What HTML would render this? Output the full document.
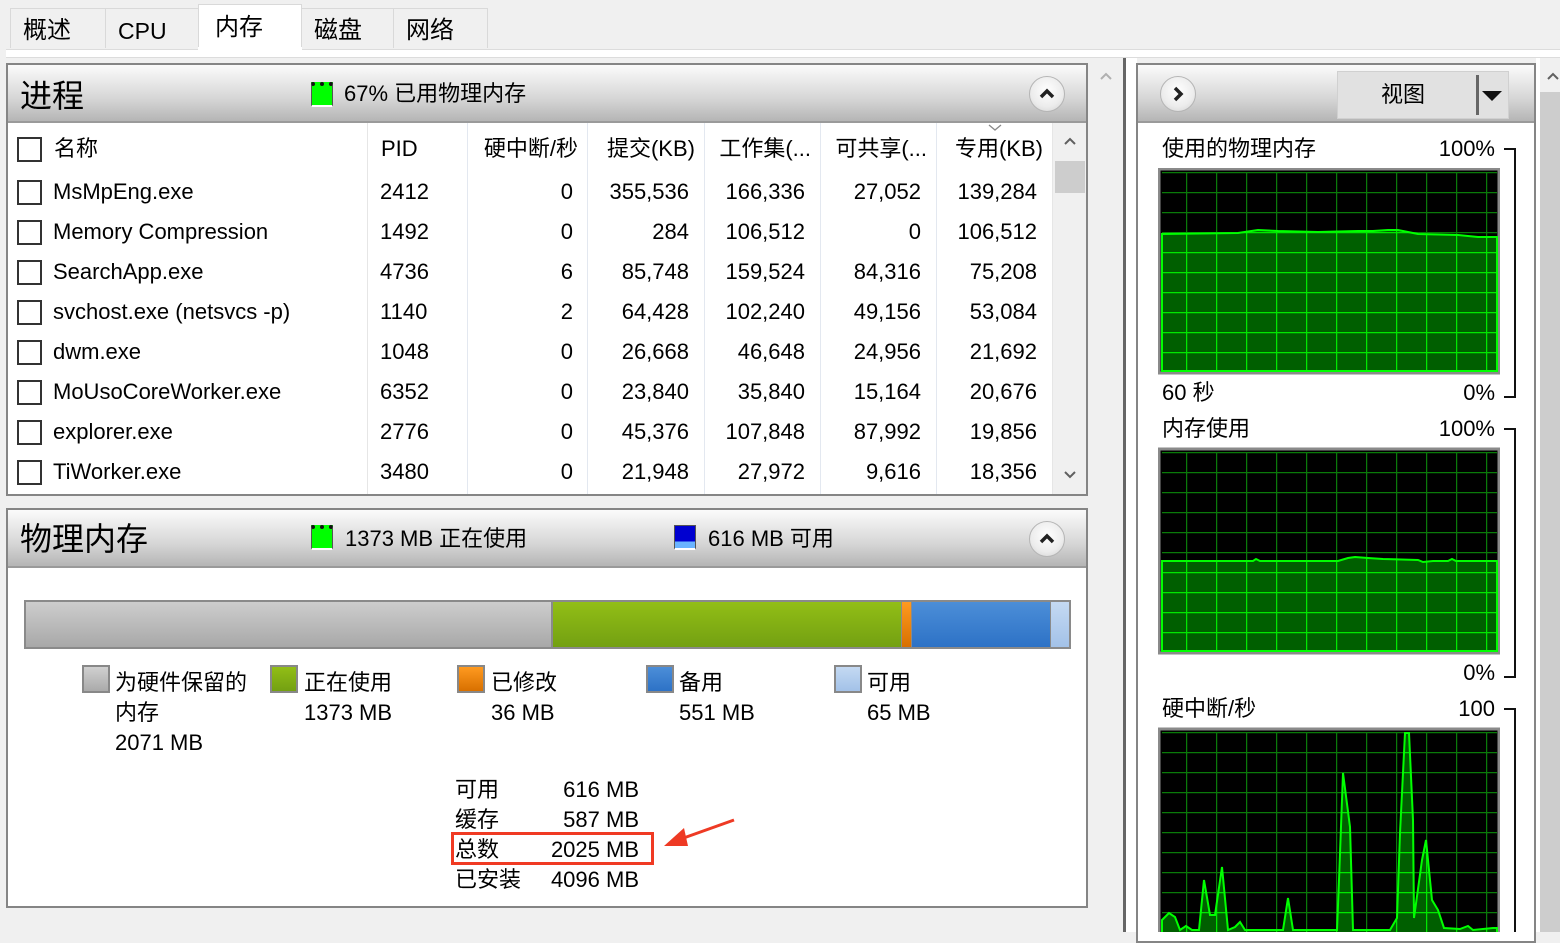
<!DOCTYPE html>
<html><head><meta charset="utf-8"><style>
*{margin:0;padding:0;box-sizing:border-box}
body{width:1560px;height:932px;overflow:hidden;background:#f0f0f0;position:relative;font-family:"Liberation Sans","Noto Sans CJK SC",sans-serif;color:#000}
.a{position:absolute}
.tab{position:absolute;top:8px;height:40px;border:1px solid #d9d9d9;border-bottom:none;background:#f0f0f0;font-size:24px;padding:8px 0 0 12px;line-height:28px}
.panel{position:absolute;border:2px solid #858585;background:#fff}
.hdr{position:absolute;left:0;right:0;top:0;height:58px;background:linear-gradient(#fbfbfb,#d6d6d6 60%,#b5b5b5);border-bottom:2px solid #9a9a9a}
.circ{position:absolute;width:36px;height:36px;border-radius:50%;background:radial-gradient(circle at 50% 40%,#fff,#ececec 60%,#d0d0d0);border:1.5px solid #b5b5b5}
.t{position:absolute;font-size:22px;line-height:26px;white-space:nowrap}
.r{text-align:right}
.cb{position:absolute;left:9px;width:25px;height:25px;border:2px solid #333;background:#fff}
.vl{position:absolute;top:0;width:1px;background:#e3e8f0}
.sq{position:absolute;width:28px;height:28px;border:2px solid #888}
</style></head><body>
<div class="tab" style="left:10px;width:96px">概述</div>
<div class="tab" style="left:105px;width:94px;font-size:23px">CPU</div>
<div class="tab" style="left:198px;width:104px;top:4px;height:46px;background:#fff;padding-top:9px;padding-left:16px">内存</div>
<div class="tab" style="left:301px;width:93px">磁盘</div>
<div class="tab" style="left:393px;width:95px">网络</div>
<div class="a" style="left:6px;top:49px;width:1554px;height:9px;background:#fff;border-top:1px solid #dcdcdc;border-bottom:1px solid #dcdcdc"></div>
<div class="a" style="left:198px;top:47px;width:104px;height:4px;background:#fff"></div>

<div class="panel" style="left:6px;top:63px;width:1082px;height:433px">
 <div class="hdr"></div>
 <div class="t" style="left:12px;top:12px;font-size:32px;line-height:38px">进程</div>
 <div class="a" style="left:303px;top:17px;width:22px;height:25px;background:#00ff00;border:1px solid #555;border-top:4px dotted #111;border-bottom:2px solid #fff"></div>
 <div class="t" style="left:336px;top:16px">67% 已用物理内存</div>
 <div class="circ" style="left:1021px;top:11px"></div>
 <svg class="a" style="left:1029px;top:19px" width="20" height="20"><path d="M4 13 L10 7 L16 13" fill="none" stroke="#222" stroke-width="3.5"/></svg>
 <div class="a" style="left:0;top:58px;width:1045px;height:371px">
  <div class="vl" style="left:359px;height:371px;background:#e6e6e6"></div>
  <div class="vl" style="left:459px;height:371px"></div>
  <div class="vl" style="left:579px;height:371px"></div>
  <div class="vl" style="left:696px;height:371px"></div>
  <div class="vl" style="left:812px;height:371px"></div>
  <div class="vl" style="left:928px;height:371px"></div>
  <div class="vl" style="left:1044px;height:371px;background:#e6e6e6"></div>
 </div>
 <div class="cb" style="top:72px"></div>
 <div class="t" style="left:46px;top:71px">名称</div>
 <div class="t" style="left:373px;top:71px">PID</div>
 <div class="t r" style="left:460px;width:110px;top:71px">硬中断/秒</div>
 <div class="t r" style="left:580px;width:107px;top:71px">提交(KB)</div>
 <div class="t r" style="left:697px;width:106px;top:71px">工作集(...</div>
 <div class="t r" style="left:813px;width:106px;top:71px">可共享(...</div>
 <div class="t r" style="left:929px;width:106px;top:71px">专用(KB)</div>
 <svg class="a" style="left:980px;top:59px" width="14" height="8"><path d="M1 1 L7 6 L13 1" fill="none" stroke="#888" stroke-width="1.3"/></svg>
 <div class="a" style="left:1045px;top:58px;width:33px;height:371px;background:#f0f0f0"></div>
 <div class="a" style="left:1047px;top:96px;width:30px;height:32px;background:#cdcdcd"></div>
 <svg class="a" style="left:1055px;top:70px" width="14" height="12"><path d="M2 9 L7 4 L12 9" fill="none" stroke="#606060" stroke-width="2"/></svg>
 <svg class="a" style="left:1055px;top:404px" width="14" height="12"><path d="M2 3 L7 8 L12 3" fill="none" stroke="#606060" stroke-width="2"/></svg>
</div>
<div id="rows"></div>

<div class="panel" style="left:6px;top:508px;width:1082px;height:400px">
 <div class="hdr"></div>
 <div class="t" style="left:12px;top:10px;font-size:32px;line-height:38px">物理内存</div>
 <div class="a" style="left:303px;top:15px;width:22px;height:25px;background:#00ff00;border:1px solid #555;border-top:4px dotted #111;border-bottom:2px solid #fff"></div>
 <div class="t" style="left:337px;top:16px">1373 MB 正在使用</div>
 <div class="a" style="left:666px;top:15px;width:22px;height:25px;background:linear-gradient(#0000d0 70%,#6ab4ff 70%);border:1px solid #555;border-bottom:2px solid #fff"></div>
 <div class="t" style="left:700px;top:16px">616 MB 可用</div>
 <div class="circ" style="left:1021px;top:11px"></div>
 <svg class="a" style="left:1029px;top:19px" width="20" height="20"><path d="M4 13 L10 7 L16 13" fill="none" stroke="#222" stroke-width="3.5"/></svg>
 <div class="a" style="left:16px;top:90px;width:1047px;height:49px;border:2px solid #8a8a8a;display:flex;background:#888">
  <div style="width:527px;background:linear-gradient(#cdcdcd,#a8a8a8);border-right:2px solid #8a8a8a"></div>
  <div style="width:349px;background:linear-gradient(#92be16,#73a012);border-right:1px solid #8a8a8a"></div>
  <div style="width:9px;background:linear-gradient(#ff9a20,#d87000)"></div>
  <div style="width:140px;background:linear-gradient(#4c8ed8,#2d72c6);border-left:1px solid #8a8a8a;border-right:1px solid #8a8a8a"></div>
  <div style="flex:1;background:linear-gradient(#c4d9f2,#a3c2e8)"></div>
 </div>
 <div class="sq" style="left:74px;top:155px;background:linear-gradient(#d0d0d0,#aaa)"></div>
 <div class="t" style="left:107px;top:158px;line-height:30px">为硬件保留的<br>内存<br>2071 MB</div>
 <div class="sq" style="left:262px;top:155px;background:linear-gradient(#92be16,#73a012)"></div>
 <div class="t" style="left:296px;top:158px;line-height:30px">正在使用<br>1373 MB</div>
 <div class="sq" style="left:449px;top:155px;background:linear-gradient(#ff9a20,#d87000)"></div>
 <div class="t" style="left:483px;top:158px;line-height:30px">已修改<br>36 MB</div>
 <div class="sq" style="left:638px;top:155px;background:linear-gradient(#4c8ed8,#2d72c6)"></div>
 <div class="t" style="left:671px;top:158px;line-height:30px">备用<br>551 MB</div>
 <div class="sq" style="left:826px;top:155px;background:linear-gradient(#c4d9f2,#a3c2e8)"></div>
 <div class="t" style="left:859px;top:158px;line-height:30px">可用<br>65 MB</div>
 <div class="t" style="left:447px;top:265px;line-height:30px">可用<br>缓存<br>总数<br>已安装</div>
 <div class="t r" style="left:520px;width:111px;top:265px;line-height:30px">616 MB<br>587 MB<br>2025 MB<br>4096 MB</div>
 <div class="a" style="left:443px;top:322px;width:203px;height:33px;border:3px solid #f03a23"></div>
 <svg class="a" style="left:650px;top:300px" width="85" height="50"><path d="M76 10 L20 30" stroke="#ee3a24" stroke-width="3"/><path d="M6 36 L26 18 L30 36 Z" fill="#ee3a24"/></svg>
</div>

<div class="a" style="left:1090px;top:58px;width:34px;height:874px;background:#f0f0f0"></div>
<svg class="a" style="left:1099px;top:70px" width="14" height="12"><path d="M2 9 L7 4 L12 9" fill="none" stroke="#b0b0b0" stroke-width="2"/></svg>
<div class="a" style="left:1123px;top:58px;width:3px;height:874px;background:#666"></div>
<div class="a" style="left:1126px;top:58px;width:11px;height:874px;background:#fff"></div>

<div class="panel" style="left:1136px;top:63px;width:400px;height:880px">
 <div class="hdr"></div>
 <div class="circ" style="left:22px;top:11px"></div>
 <svg class="a" style="left:30px;top:19px" width="20" height="20"><path d="M7 4 L13 10 L7 16" fill="none" stroke="#222" stroke-width="3.5"/></svg>
 <div class="a" style="left:199px;top:6px;width:172px;height:48px;background:#e1e1e1;border:1px solid #d0d0d0"></div>
 <div class="t" style="left:243px;top:17px">视图</div>
 <div class="a" style="left:338px;top:10px;width:3px;height:40px;background:#666"></div>
 <svg class="a" style="left:342px;top:24px" width="24" height="14"><path d="M2 2 L22 2 L12 12 Z" fill="#111"/></svg>
</div>
<div class="a" style="left:1536px;top:58px;width:4px;height:874px;background:#fff"></div>
<div class="a" style="left:1540px;top:58px;width:20px;height:874px;background:#f0f0f0"></div>
<div class="a" style="left:1540px;top:92px;width:20px;height:840px;background:#cdcdcd"></div>
<svg class="a" style="left:1546px;top:70px" width="14" height="12"><path d="M2 9 L7 4 L12 9" fill="none" stroke="#606060" stroke-width="2"/></svg>

<div class="t" style="left:1162px;top:136px">使用的物理内存</div>
<div class="t r" style="left:1400px;width:95px;top:136px">100%</div>
<div class="t" style="left:1162px;top:380px">60 秒</div>
<div class="t r" style="left:1400px;width:95px;top:380px">0%</div>
<div class="t" style="left:1162px;top:416px">内存使用</div>
<div class="t r" style="left:1400px;width:95px;top:416px">100%</div>
<div class="t r" style="left:1400px;width:95px;top:660px">0%</div>
<div class="t" style="left:1162px;top:696px">硬中断/秒</div>
<div class="t r" style="left:1400px;width:95px;top:696px">100</div>
<svg class="a" style="left:1500px;top:140px" width="20" height="792">
 <path d="M4 9 H15 V257 H4 M4 289 H15 V537 H4 M4 569 H15 V800" fill="none" stroke="#111" stroke-width="2"/>
</svg>

<svg class="a" style="left:1158px;top:168px" width="342" height="764">
 <defs>
  <pattern id="gd" x="28" y="4" width="30" height="20" patternUnits="userSpaceOnUse"><path d="M0 0 V20 M0 0 H30" stroke="#0a7a0a" stroke-width="2.5"/></pattern>
  <pattern id="gb" x="28" y="4" width="30" height="20" patternUnits="userSpaceOnUse"><rect width="30" height="20" fill="#005f00"/><path d="M0 0 V20 M0 0 H30" stroke="#00e800" stroke-width="2.5"/></pattern>
 </defs>
 <rect x="1" y="1" width="340" height="204" fill="#000" stroke="#8a8a8a" stroke-width="3"/>
 <rect x="4" y="4" width="335" height="199" fill="url(#gd)"/>
 <path d="M4 66 L80 65 L100 62 L120 63 L160 64 L200 63 L215 63 L230 62 L240 62 L260 66 L300 67 L320 69 L339 69 V203 H4 Z" fill="url(#gb)" stroke="#00ff00" stroke-width="2"/>
 <g transform="translate(0,280)">
 <rect x="1" y="1" width="340" height="204" fill="#000" stroke="#8a8a8a" stroke-width="3"/>
 <rect x="4" y="4" width="335" height="199" fill="url(#gd)"/>
 <path d="M4 113 L95 113 L98 111 L102 113 L180 113 L190 110 L197 109 L210 110 L225 111 L260 112 L265 114 L275 113 L290 113 L294 111 L298 113 L339 113 V203 H4 Z" fill="url(#gb)" stroke="#00ff00" stroke-width="2"/>
 </g>
 <g transform="translate(0,560)">
 <rect x="1" y="1" width="340" height="220" fill="#000" stroke="#8a8a8a" stroke-width="3"/>
 <rect x="4" y="4" width="335" height="210" fill="url(#gd)"/>
 <path d="M4 192 L11 185 L17 189 L22 202 L28 198 L34 202 L41 202 L46 152 L52 187 L57 187 L64 139 L70 202 L77 199 L82 194 L87 202 L125 202 L130 170 L135 202 L179 202 L181 152 L185 45 L192 99 L195 202 L232 202 L239 190 L242 105 L247 5 L251 5 L255 92 L256 190 L264 132 L268 112 L274 172 L280 182 L286 200 L302 201 L310 198 L315 202 L335 200 L339 200 V214 H4 Z" fill="url(#gb)" stroke="#00ff00" stroke-width="2"/>
 </g>
</svg>

<script>
var rows=[["MsMpEng.exe","2412","0","355,536","166,336","27,052","139,284"],
["Memory Compression","1492","0","284","106,512","0","106,512"],
["SearchApp.exe","4736","6","85,748","159,524","84,316","75,208"],
["svchost.exe (netsvcs -p)","1140","2","64,428","102,240","49,156","53,084"],
["dwm.exe","1048","0","26,668","46,648","24,956","21,692"],
["MoUsoCoreWorker.exe","6352","0","23,840","35,840","15,164","20,676"],
["explorer.exe","2776","0","45,376","107,848","87,992","19,856"],
["TiWorker.exe","3480","0","21,948","27,972","9,616","18,356"]];
var h="";
rows.forEach(function(r,i){var y=179+i*40;
h+='<div class="cb" style="left:17px;top:'+(y+1)+'px"></div>';
h+='<div class="t" style="left:53px;top:'+y+'px">'+r[0]+'</div>';
h+='<div class="t" style="left:380px;top:'+y+'px">'+r[1]+'</div>';
var R=[573,689,805,921,1037];
for(var k=0;k<5;k++)h+='<div class="t r" style="left:'+(R[k]-120)+'px;width:120px;top:'+y+'px">'+r[k+2]+'</div>';
});
document.getElementById("rows").innerHTML=h;
</script>
</body></html>
